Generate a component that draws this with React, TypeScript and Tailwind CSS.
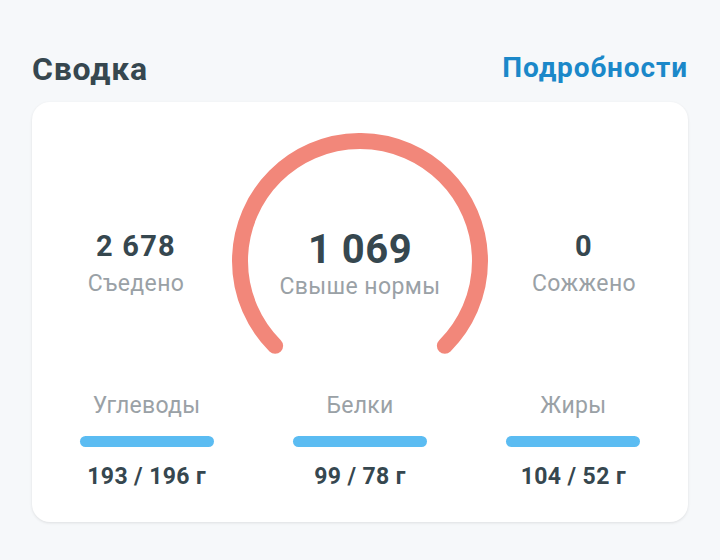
import React from 'react';

const macros = [
  { label: 'Углеводы', value: '193 / 196 г' },
  { label: 'Белки', value: '99 / 78 г' },
  { label: 'Жиры', value: '104 / 52 г' },
];

const Gauge: React.FC = () => (
  <svg width="256" height="230" viewBox="0 0 256 230" className="absolute left-0 top-0">
    <path
      d="M 43.15 212.85 A 120 120 0 1 1 212.85 212.85"
      fill="none"
      stroke="#f2877a"
      strokeWidth="16"
      strokeLinecap="round"
    />
  </svg>
);

const Stat: React.FC<{ value: string; label: string }> = ({ value, label }) => (
  <div className="flex-1 flex flex-col items-center pt-[99px]">
    <div className="text-[29px] leading-none font-bold tracking-[1.2px] text-[#36474f]">{value}</div>
    <div className="mt-[11px] text-[23px] leading-none tracking-[0.4px] text-[#9aa1a6]">{label}</div>
  </div>
);

const App: React.FC = () => {
  return (
    <div className="w-[720px] h-[560px] bg-[#f6f8fa] px-8 pt-[53px] font-['Roboto',sans-serif]">
      <header className="flex items-start justify-between">
        <h1 className="text-[32px] leading-none font-bold tracking-[0.8px] text-[#36474f]">Сводка</h1>
        <a className="mt-[1px] text-[28px] leading-none font-bold tracking-[0.9px] text-[#1b88c9]">Подробности</a>
      </header>

      <div className="mt-[17px] h-[420px] rounded-[18px] bg-white shadow-[0_1px_3px_rgba(0,0,0,0.1)] px-2 pt-[31px]">
        <div className="flex h-[261px]">
          <Stat value="2 678" label="Съедено" />
          <div className="relative w-[256px] h-[230px] shrink-0">
            <Gauge />
            <div className="absolute inset-x-0 top-[97px] flex flex-col items-center">
              <div className="text-[40px] leading-none font-bold tracking-[0.5px] text-[#36474f]">1 069</div>
              <div className="mt-[5px] text-[23px] leading-none tracking-[0.4px] text-[#9aa1a6]">Свыше нормы</div>
            </div>
          </div>
          <Stat value="0" label="Сожжено" />
        </div>

        <div className="grid grid-cols-3">
          {macros.map(m => (
            <div key={m.label} className="flex flex-col items-center">
              <div className="text-[23px] leading-none tracking-[0.3px] text-[#9aa1a6]">{m.label}</div>
              <div className="mt-[19px] w-[134px] h-[11px] rounded-full bg-[#5bbcf2]" />
              <div className="mt-[18px] text-[23px] leading-none font-bold tracking-[0.4px] text-[#36474f]">{m.value}</div>
            </div>
          ))}
        </div>
      </div>
    </div>
  );
};

export default App;
